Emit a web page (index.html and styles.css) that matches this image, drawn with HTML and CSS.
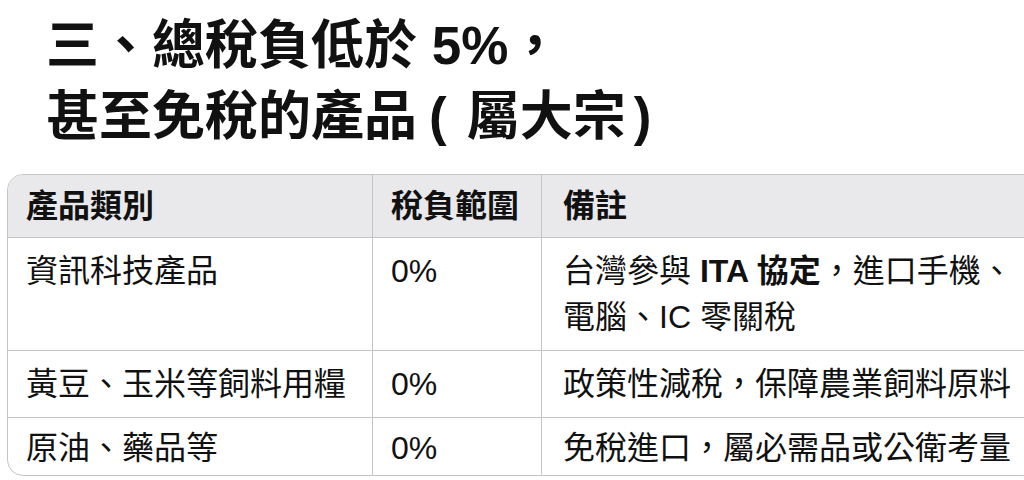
FILE: index.html
```html
<!DOCTYPE html>
<html lang="zh-Hant">
<head>
<meta charset="utf-8">
<link rel="stylesheet" href="styles.css">
</head>
<body>
<h1 class="title">三、總稅負低於 5%，<br>甚至免稅的產品<span class="paren-l">(</span>屬大宗<span class="paren-r">)</span></h1>
<div class="table-wrap">
  <table class="tax">
    <thead>
      <tr>
        <th class="c1">產品類別</th>
        <th class="c2">稅負範圍</th>
        <th class="c3">備註</th>
      </tr>
    </thead>
    <tbody>
      <tr>
        <td class="c1">資訊科技產品</td>
        <td class="c2">0%</td>
        <td class="c3">台灣參與 <strong>ITA 協定</strong>，進口手機、<br>電腦、IC 零關稅</td>
      </tr>
      <tr>
        <td class="c1">黃豆、玉米等飼料用糧</td>
        <td class="c2">0%</td>
        <td class="c3">政策性減稅，保障農業飼料原料</td>
      </tr>
      <tr class="last">
        <td class="c1">原油、藥品等</td>
        <td class="c2">0%</td>
        <td class="c3">免稅進口，屬必需品或公衛考量</td>
      </tr>
    </tbody>
  </table>
</div>
</body>
</html>
```

FILE: styles.css
```css
html, body {
  margin: 0;
  padding: 0;
  background: #ffffff;
  overflow: hidden;
}

body {
  width: 1024px;
  height: 480px;
  font-family: "Liberation Sans", "Noto Sans CJK TC", sans-serif;
  color: #111111;
}

.title {
  margin: 10px 0 0 0;
  padding-left: 46px;
  font-size: 53px;
  line-height: 71px;
  font-weight: 700;
  color: #111111;
}

.paren-l {
  margin: 0 20px 0 12px;
}

.paren-r {
  margin-left: 8px;
}

.table-wrap {
  margin: 22px 0 0 7px;
  width: 1016px;
  border: 1px solid #c4c4c6;
  border-radius: 16px 2px 2px 16px;
  overflow: hidden;
}

.tax {
  width: 100%;
  border-collapse: collapse;
  table-layout: fixed;
  font-size: 32px;
  line-height: 46px;
}

.tax th,
.tax td {
  text-align: left;
  vertical-align: top;
  padding: 10px 18px 10px 18px;
  border-right: 1px solid #c4c4c6;
  border-bottom: 1px solid #c4c4c6;
  white-space: nowrap;
}

.tax th:last-child,
.tax td:last-child {
  border-right: none;
  padding-right: 0;
}

.tax tbody tr:last-child td {
  border-bottom: none;
}

.tax .last td {
  padding-top: 7px;
  padding-bottom: 4px;
}

.tax thead th {
  background: #e9e9ec;
  font-weight: 700;
  padding-top: 8px;
  padding-bottom: 8px;
}

.tax .c1 { width: 328px; }
.tax .c2 { width: 132px; }
.tax .c3 { padding-left: 21px; }

.tax strong {
  font-weight: 700;
}
```
